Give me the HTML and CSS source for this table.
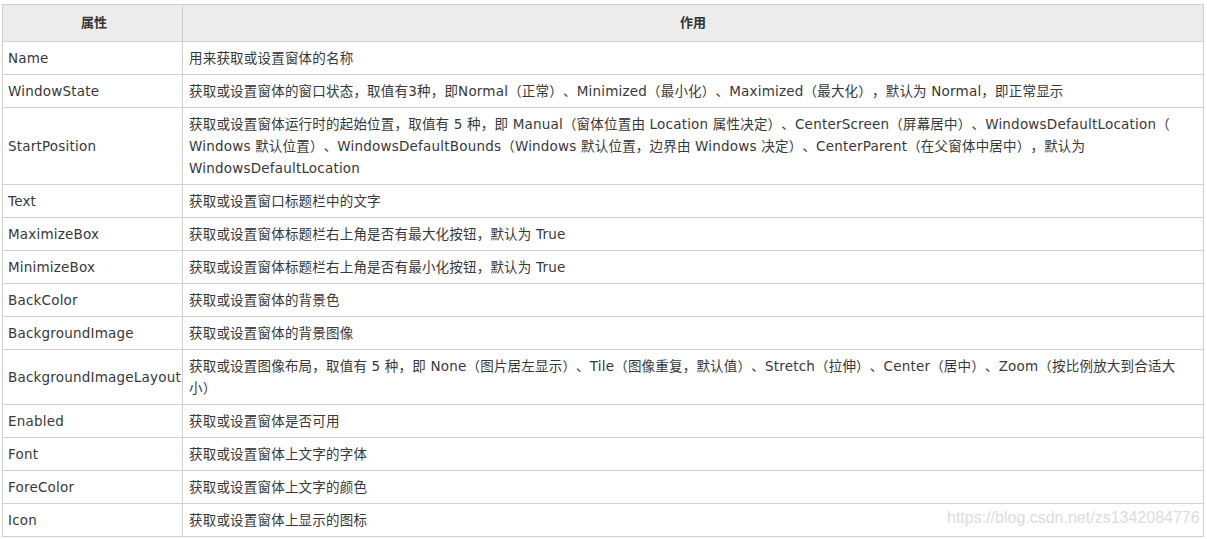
FILE: index.html
```html
<!DOCTYPE html>
<html lang="zh-CN">
<head>
<meta charset="utf-8">
<title>窗体属性</title>
<link rel="stylesheet" href="styles.css">
</head>
<body>
<div class="wrap">
<table class="props">
  <thead>
    <tr><th class="c1">属性</th><th>作用</th></tr>
  </thead>
  <tbody>
    <tr><td>Name</td><td>用来获取或设置窗体的名称</td></tr>
    <tr><td>WindowState</td><td>获取或设置窗体的窗口状态，取值有3种，即Normal（正常）、Minimized（最小化）、Maximized（最大化），默认为 Normal，即正常显示</td></tr>
    <tr><td>StartPosition</td><td>获取或设置窗体运行时的起始位置，取值有 5 种，即 Manual（窗体位置由 Location 属性决定）、CenterScreen（屏幕居中）、WindowsDefaultLocation（ Windows 默认位置）、WindowsDefaultBounds（Windows 默认位置，边界由 Windows 决定）、CenterParent（在父窗体中居中），默认为 WindowsDefaultLocation</td></tr>
    <tr><td>Text</td><td>获取或设置窗口标题栏中的文字</td></tr>
    <tr><td>MaximizeBox</td><td>获取或设置窗体标题栏右上角是否有最大化按钮，默认为 True</td></tr>
    <tr><td>MinimizeBox</td><td>获取或设置窗体标题栏右上角是否有最小化按钮，默认为 True</td></tr>
    <tr><td>BackColor</td><td>获取或设置窗体的背景色</td></tr>
    <tr><td>BackgroundImage</td><td>获取或设置窗体的背景图像</td></tr>
    <tr><td>BackgroundImageLayout</td><td>获取或设置图像布局，取值有 5 种，即 None（图片居左显示）、Tile（图像重复，默认值）、Stretch（拉伸）、Center（居中）、Zoom（按比例放大到合适大小）</td></tr>
    <tr><td>Enabled</td><td>获取或设置窗体是否可用</td></tr>
    <tr><td>Font</td><td>获取或设置窗体上文字的字体</td></tr>
    <tr><td>ForeColor</td><td>获取或设置窗体上文字的颜色</td></tr>
    <tr><td>Icon</td><td>获取或设置窗体上显示的图标</td></tr>
  </tbody>
</table>
<div class="watermark">https://blog.csdn.net/zs1342084776</div>
</div>
</body>
</html>
```

FILE: styles.css
```css
html, body {
  margin: 0;
  padding: 0;
  background: #ffffff;
}

.wrap {
  position: relative;
  padding: 4px 0 0 2px;
}

.props {
  border-collapse: collapse;
  width: 1202px;
  table-layout: fixed;
  font-family: "DejaVu Sans", "Noto Sans CJK SC", sans-serif;
  font-size: 13.5px;
  letter-spacing: 0.2px;
  color: #383838;
  text-spacing-trim: space-all;
}

.props th {
  background: #ececec;
  border: 1px solid #d0d0d0;
  padding: 7px 5px;
  line-height: 22px;
  font-weight: bold;
  font-size: 13px;
  letter-spacing: 0;
  text-align: center;
  color: #333333;
}

.props th.c1 {
  width: 172px;
  padding-right: 2px;
}

.props td {
  border: 1px solid #d0d0d0;
  padding: 5px 2px 5px 5px;
  line-height: 22px;
  vertical-align: middle;
  text-align: left;
  white-space: normal;
}

.props td + td {
  padding: 5px 5px 5px 6px;
}

.watermark {
  position: absolute;
  left: 947px;
  top: 509px;
  font-family: "Liberation Sans", Arial, sans-serif;
  font-size: 16px;
  color: #dcdcdc;
  white-space: nowrap;
}
```
